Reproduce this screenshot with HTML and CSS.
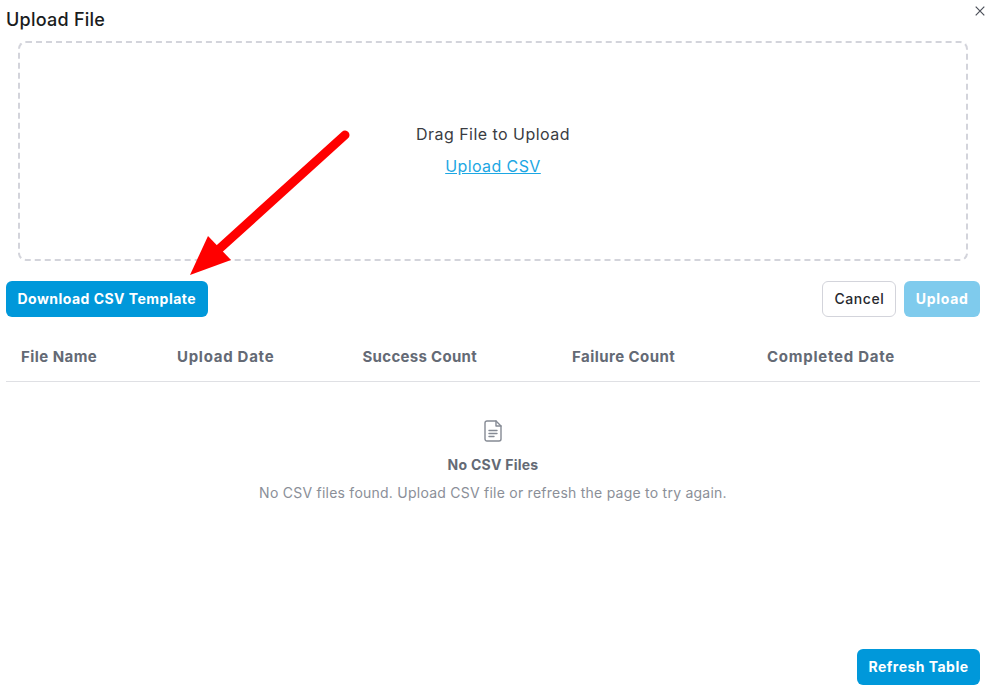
FILE: index.html
```html
<!DOCTYPE html>
<html lang="en">
<head>
<meta charset="utf-8">
<title>Upload File</title>
<link rel="stylesheet" href="styles.css">
</head>
<body>
<main class="dialog">
  <header class="dialog-head">
    <h1 class="title">Upload File</h1>
    <button class="close" aria-label="Close">
      <svg width="10" height="10" viewBox="0 0 10 10"><path d="M0.7 0.7L9.3 9.3M9.3 0.7L0.7 9.3" stroke="#4b4f58" stroke-width="1.2" fill="none"/></svg>
    </button>
  </header>
  <section class="dropzone">
    <p class="drag">Drag File to Upload</p>
    <a class="link" href="#">Upload CSV</a>
  </section>
  <div class="actions">
    <button class="btn primary">Download CSV Template</button>
    <div class="actions-right">
      <button class="btn secondary">Cancel</button>
      <button class="btn primary disabled">Upload</button>
    </div>
  </div>
  <div class="table-head">
    <span class="col c1">File Name</span>
    <span class="col c2">Upload Date</span>
    <span class="col c3">Success Count</span>
    <span class="col c4">Failure Count</span>
    <span class="col c5">Completed Date</span>
  </div>
  <section class="empty">
    <svg class="doc" width="18" height="22" viewBox="0 0 18 22" fill="none" stroke="#858a94" stroke-width="1.4" stroke-linejoin="round" stroke-linecap="round">
      <path d="M3 1H12L17 6V19C17 20.1 16.1 21 15 21H3C1.9 21 1 20.1 1 19V3C1 1.9 1.9 1 3 1Z"/>
      <path d="M12 1V6H17"/>
      <path d="M5 10.5H13M5 13.5H13M5 16.5H10"/>
    </svg>
    <h2 class="empty-title">No CSV Files</h2>
    <p class="empty-text">No CSV files found. Upload CSV file or refresh the page to try again.</p>
  </section>
  <footer class="foot">
    <button class="btn primary">Refresh Table</button>
  </footer>
</main>
<svg class="arrow" width="998" height="694" viewBox="0 0 998 694">
  <path d="M345 135L218 250" stroke="#ff0000" stroke-width="9" stroke-linecap="round" fill="none"/>
  <path d="M190 275L208 236L231 260Z" fill="#ff0000"/>
</svg>
</body>
</html>
```
FILE: styles.css
```css
* { box-sizing: border-box; }
html, body { margin: 0; height: 100%; background: #fff; }
body {
  font-family: Inter, "Open Sans", "Liberation Sans", sans-serif;
  color: #33363d;
  position: relative;
  overflow: hidden;
}
.dialog {
  height: 694px;
  padding: 0 18px 9px 6px;
  display: flex;
  flex-direction: column;
}
.dialog-head {
  height: 41px;
  display: flex;
  justify-content: space-between;
  align-items: flex-start;
  position: relative;
}
.title {
  margin: 9px 0 0;
  font-size: 18px;
  line-height: 22px;
  font-weight: 500;
  letter-spacing: 0.25px;
  color: #1a1c20;
}
.close {
  position: absolute;
  top: 6px;
  right: -5px;
  padding: 0;
  border: 0;
  background: none;
  line-height: 0;
}
.dropzone {
  height: 220px;
  margin: 0 12px;
  border: 2px dashed #d3d4db;
  border-radius: 8px;
  display: flex;
  flex-direction: column;
  align-items: center;
  padding-top: 81px;
}
.drag {
  margin: 0;
  font-size: 16px;
  line-height: 20px;
  letter-spacing: 0.47px;
  font-weight: 400;
  color: #3a3c42;
}
.link {
  margin-top: 12px;
  font-size: 16px;
  line-height: 20px;
  letter-spacing: 0.4px;
  color: #1ca7e3;
  text-decoration: underline;
}
.actions {
  margin-top: 20px;
  display: flex;
  justify-content: space-between;
}
.actions-right { display: flex; gap: 8px; }
.btn {
  height: 36px;
  padding: 0 11.5px 2px;
  border-radius: 6px;
  border: 0;
  font-family: inherit;
  font-size: 14px;
  font-weight: 700;
  letter-spacing: 0.47px;
}
.primary { background: #0098da; color: #fff; }
.disabled { background: #7fcbed; letter-spacing: 0.7px; }
.secondary {
  background: #fff;
  border: 1px solid #d3d4db;
  color: #26282e;
  font-weight: 500;
  letter-spacing: 0.55px;
  padding: 0 11px 2px;
}
.table-head {
  margin-top: 21px;
  height: 44px;
  border-bottom: 1px solid #dfe0e4;
  display: grid;
  grid-template-columns: 171px 185.5px 209.5px 195px 1fr;
  align-items: center;
  padding-bottom: 7px;
}
.col {
  font-size: 15px;
  font-weight: 700;
  letter-spacing: 0.45px;
  color: #646a75;
}
.c1 { padding-left: 15px; }
.c2 { letter-spacing: 0.72px; }
.c3 { letter-spacing: 0.3px; }
.c5 { letter-spacing: 0.75px; }
.empty {
  margin-top: 38px;
  display: flex;
  flex-direction: column;
  align-items: center;
}
.empty-title {
  margin: 13px 0 0;
  font-size: 14px;
  line-height: 20px;
  font-weight: 700;
  letter-spacing: 0.25px;
  color: #646a75;
}
.empty-text {
  margin: 8px 0 0;
  font-size: 14px;
  line-height: 20px;
  letter-spacing: 0.24px;
  color: #8b8f98;
}
.foot {
  margin-top: auto;
  display: flex;
  justify-content: flex-end;
}
.arrow {
  position: absolute;
  left: 0;
  top: 0;
  pointer-events: none;
}
```
